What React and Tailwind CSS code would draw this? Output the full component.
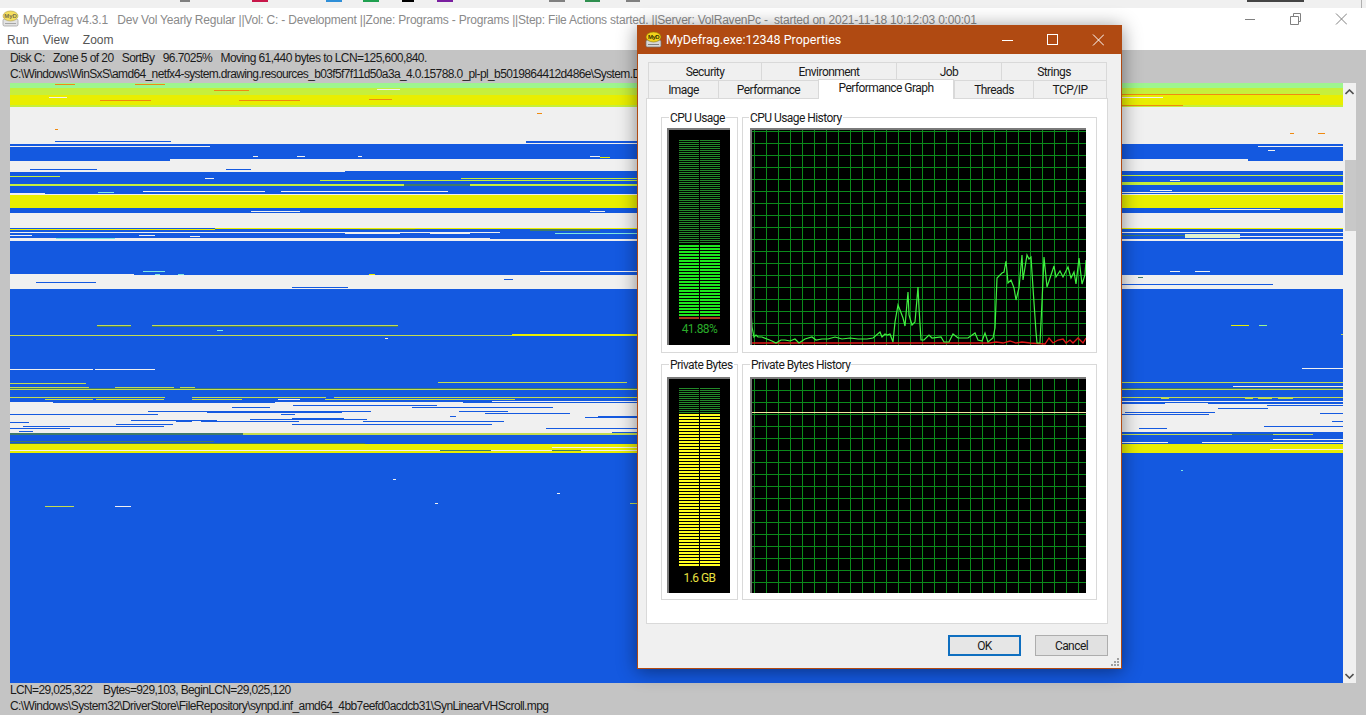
import React from "react";

const COLORS = {
  b: "#1459e0",
  w: "#f0f0f0",
  y: "#e9ee00",
  l: "#9df58f",
  n: "#c6ef3c",
  o: "#f08a10",
  g: "#3f7a6a",
  k: "#c4dc50",
  c: "#7fe8e0",
  p: "#dff0d0",
};

// y, height, x1, x2, colour -- read off the disk map, page coords
const MAP_ROWS = [
  [83, 5, 10, 1343, "l"], [88, 7, 10, 1343, "n"], [95, 10, 10, 1343, "y"], [105, 2, 10, 1343, "n"],
  [84, 1, 55, 75, "o"], [84, 1, 135, 165, "o"], [90, 1, 214, 249, "o"], [89, 1, 377, 400, "w"],
  [100, 1, 100, 151, "o"], [100, 1, 239, 300, "o"], [99, 1, 369, 392, "o"], [97, 1, 49, 67, "w"],
  [94, 1, 1122, 1320, "o"], [97, 1, 1122, 1163, "w"], [105, 1, 1122, 1183, "o"], [108, 1, 1250, 1262, "o"], [108, 1, 1270, 1281, "o"],
  [107, 37, 10, 1343, "w"], [129, 1, 55, 58, "o"], [113, 1, 537, 542, "o"], [133, 1, 1290, 1294, "o"], [133, 1, 1318, 1325, "o"],
  [141, 1, 55, 171, "b"], [141, 2, 526, 637, "b"],
  [145, 16, 10, 1343, "b"], [146, 1, 10, 210, "w"], [146, 1, 1258, 1343, "w"], [156, 1, 253, 258, "w"], [156, 1, 297, 305, "w"], [156, 1, 358, 362, "w"], [156, 1, 590, 600, "w"], [157, 1, 600, 610, "y"], [150, 1, 1268, 1275, "w"],
  [159, 2, 170, 1248, "w"], [161, 10, 10, 1343, "w"], [169, 1, 30, 97, "b"], [169, 1, 226, 251, "b"],
  [171, 14, 10, 1343, "b"], [171, 1, 10, 345, "w"], [176, 1, 10, 60, "n"], [175, 1, 1122, 1343, "n"], [178, 1, 205, 214, "w"], [178, 1, 461, 637, "n"], [180, 1, 320, 637, "n"], [180, 1, 1170, 1180, "w"],
  [184, 2, 10, 404, "n"], [184, 2, 404, 470, "g"], [184, 2, 470, 637, "n"], [182, 3, 1122, 1343, "n"],
  [186, 8, 10, 1343, "b"], [191, 1, 143, 265, "w"], [191, 1, 281, 448, "w"], [192, 1, 98, 114, "c"], [192, 1, 1122, 1343, "w"], [190, 1, 1150, 1172, "w"], [193, 1, 10, 45, "w"],
  [194, 1, 10, 1343, "w"], [195, 13, 10, 1343, "y"],
  [208, 5, 10, 1343, "b"], [211, 1, 251, 300, "w"], [211, 1, 590, 605, "w"], [209, 1, 1210, 1280, "w"],
  [213, 15, 10, 1343, "w"],
  [228, 1, 215, 1343, "y"], [229, 1, 10, 215, "y"], [229, 1, 360, 415, "g"], [230, 2, 10, 1343, "b"], [229, 2, 530, 600, "g"],
  [232, 1, 10, 500, "w"], [232, 2, 500, 637, "b"], [232, 1, 1122, 1343, "w"], [233, 1, 44, 190, "b"], [233, 2, 190, 637, "b"], [233, 1, 345, 400, "w"], [233, 1, 430, 470, "w"],
  [234, 4, 10, 1343, "b"], [235, 1, 10, 32, "w"], [235, 1, 139, 155, "w"], [236, 1, 190, 200, "w"], [235, 1, 1122, 1185, "g"], [233, 1, 555, 637, "c"],
  [234, 5, 1185, 1240, "p"], [236, 1, 1240, 1343, "w"],
  [238, 3, 10, 1343, "w"], [238, 1, 56, 115, "c"], [238, 1, 490, 1343, "b"], [241, 1, 570, 637, "b"],
  [271, 1, 143, 165, "c"], [271, 1, 540, 637, "w"], [271, 1, 1170, 1180, "w"], [271, 1, 1195, 1210, "w"], [274, 1, 10, 134, "w"], [274, 1, 155, 160, "c"], [274, 1, 178, 184, "c"], [274, 2, 369, 375, "y"],
  [275, 14, 10, 1343, "w"], [282, 1, 36, 96, "b"], [287, 1, 292, 348, "b"], [279, 1, 504, 513, "b"], [277, 1, 1138, 1143, "g"], [284, 1, 1122, 1273, "b"],
  [325, 1, 97, 131, "k"], [326, 1, 97, 131, "g"], [325, 1, 152, 398, "k"], [326, 1, 152, 398, "g"], [330, 1, 217, 223, "c"], [325, 1, 1231, 1249, "y"], [325, 1, 1259, 1267, "l"],
  [335, 1, 10, 637, "k"], [334, 2, 512, 637, "y"], [334, 1, 1341, 1343, "k"], [338, 1, 385, 388, "w"], [368, 1, 1302, 1343, "w"], [369, 1, 10, 93, "w"], [369, 1, 95, 155, "w"],
  [382, 1, 438, 627, "k"], [382, 1, 1122, 1343, "k"], [383, 1, 10, 86, "k"], [386, 1, 1233, 1343, "w"], [387, 1, 10, 89, "k"], [387, 1, 115, 174, "k"], [387, 1, 180, 195, "k"], [388, 1, 1237, 1343, "k"],
  [388, 1, 10, 1343, "g"], [389, 1, 10, 1343, "k"], [397, 1, 10, 165, "k"], [397, 1, 192, 326, "k"], [397, 1, 334, 1343, "k"],
  [399, 1, 45, 93, "k"], [399, 1, 96, 164, "k"], [399, 1, 192, 242, "k"], [399, 1, 278, 300, "w"], [399, 1, 325, 515, "k"], [398, 1, 1161, 1169, "k"], [398, 1, 1245, 1253, "k"], [398, 1, 1258, 1272, "k"], [398, 1, 1278, 1293, "k"],
  [402, 1, 10, 53, "w"], [403, 1, 105, 258, "w"], [402, 1, 275, 463, "w"], [401, 1, 492, 637, "w"], [401, 1, 1122, 1343, "w"],
  [403, 30, 10, 1343, "w"], [403, 1, 1122, 1165, "b"], [403, 1, 1208, 1343, "b"], [405, 1, 293, 437, "b"], [405, 1, 1267, 1343, "b"], [407, 1, 232, 270, "b"], [407, 1, 412, 553, "b"], [408, 1, 1218, 1268, "b"],
  [411, 1, 148, 209, "b"], [411, 2, 207, 342, "b"], [411, 1, 342, 371, "b"], [411, 1, 459, 508, "b"], [412, 1, 1125, 1215, "b"], [413, 1, 485, 570, "b"], [413, 1, 1320, 1343, "b"], [414, 1, 10, 158, "b"], [414, 1, 281, 295, "b"], [414, 1, 1122, 1209, "b"],
  [416, 1, 450, 456, "b"], [416, 1, 598, 637, "b"], [417, 1, 585, 637, "b"], [419, 1, 250, 367, "b"], [418, 2, 292, 344, "b"], [420, 1, 131, 217, "b"], [420, 2, 176, 192, "b"], [421, 1, 201, 299, "b"], [421, 1, 363, 504, "b"], [421, 1, 1332, 1343, "b"], [422, 1, 10, 29, "b"],
  [424, 1, 116, 173, "b"], [424, 1, 292, 492, "b"], [426, 1, 23, 164, "b"], [426, 1, 1264, 1343, "b"], [428, 1, 10, 70, "b"], [428, 1, 546, 637, "b"], [428, 1, 1139, 1167, "b"], [431, 1, 19, 33, "b"], [432, 1, 612, 637, "b"], [432, 1, 1122, 1343, "b"],
  [433, 2, 10, 243, "g"], [433, 2, 243, 637, "k"], [434, 2, 1122, 1232, "k"], [434, 2, 1232, 1273, "g"], [434, 2, 1273, 1313, "k"],
  [435, 9, 10, 1343, "b"], [434, 1, 1313, 1343, "b"], [439, 1, 1273, 1343, "w"], [441, 1, 10, 214, "g"], [442, 1, 1122, 1168, "w"], [442, 1, 1202, 1343, "w"], [443, 1, 10, 365, "g"],
  [444, 9, 10, 1343, "y"], [450, 1, 10, 637, "w"], [450, 1, 440, 491, "g"], [450, 1, 552, 581, "g"], [447, 1, 552, 637, "w"], [449, 1, 1270, 1343, "w"],
  [479, 1, 393, 396, "w"], [493, 1, 557, 560, "w"], [503, 1, 435, 438, "w"], [503, 1, 630, 637, "k"], [506, 1, 45, 74, "k"], [506, 1, 115, 131, "w"], [470, 1, 1181, 1183, "c"],
];

const CPU_GREEN = "751,310 752,327 754,337 756,335 758,337 762,337 767,339 772,341 776,343 781,340 785,340 790,341 795,339 799,343 805,339 812,337 816,340 822,339 828,339 835,337 842,339 850,338 858,339 867,339 873,338 880,332 882,337 885,334 887,335 890,334 893,342 895,322 898,305 900,310 903,318 905,326 908,292 909,315 912,325 915,322 918,287 919,308 921,340 924,340 929,335 932,338 941,337 944,342 949,342 953,334 958,338 968,338 975,333 978,340 982,341 985,333 988,342 993,338 995,328 997,278 1002,273 1004,272 1006,261 1008,283 1011,280 1014,288 1016,300 1019,288 1022,255 1023,280 1027,255 1029,259 1031,257 1033,288 1036,332 1037,343 1040,343 1042,302 1044,257 1047,287 1051,275 1054,266 1056,277 1060,271 1063,277 1068,267 1071,278 1074,272 1076,284 1079,258 1082,284 1085,275 1086,260";
const CPU_RED = "751,343 990,343 996,342 1003,343 1010,341 1016,343 1022,342 1030,343 1045,344 1049,338 1053,343 1058,340 1063,339 1066,343 1070,340 1073,343 1078,338 1083,343 1086,338";

const UPPER_TABS = [
  { label: "Security", width: "w-[113px]" },
  { label: "Environment", width: "w-[135px]" },
  { label: "Job", width: "w-[105px]" },
  { label: "Strings", width: "w-[106px]" },
];

const LOWER_TABS = [
  { label: "Image", width: "w-[70px]" },
  { label: "Performance", width: "w-[100px]" },
  { label: "Performance Graph", width: "w-[136px]", active: true },
  { label: "Threads", width: "w-[79px]" },
  { label: "TCP/IP", width: "w-[74px]" },
];

const TOP_MARKS = [
  "left-[180px] w-[10px] bg-[#808080]",
  "left-[252px] w-[16px] bg-[#c8174a]",
  "left-[326px] w-[16px] bg-[#2f8fd8]",
  "left-[363px] w-[16px] bg-[#20a050]",
  "left-[402px] w-[12px] bg-[#000000]",
  "left-[437px] w-[16px] bg-[#7a1fa0]",
  "left-[549px] w-[16px] bg-[#808080]",
  "left-[585px] w-[15px] bg-[#2f8f4f]",
  "left-[626px] w-[14px] bg-[#808080]",
  "left-[1247px] w-[57px] bg-[#444444]",
];

function DiskMap() {
  return (
    <svg width="1333" height="600" viewBox="10 83 1333 600" shapeRendering="crispEdges" className="block">
      <rect x="10" y="83" width="1333" height="600" fill={COLORS.b} />
      {MAP_ROWS.map(([y, h, x1, x2, c], i) => (
        <rect key={i} x={x1} y={y} width={x2 - x1} height={h} fill={COLORS[c]} />
      ))}
    </svg>
  );
}

function Scrollbar() {
  return (
    <div className="w-[13px] h-[600px] bg-[#f0f0f0] flex flex-col items-center justify-between pt-[6px] pb-[4px]">
      <svg width="9" height="6" viewBox="0 0 9 6">
        <path d="M0.5 5 L4.5 1 L8.5 5" fill="none" stroke="#505050" strokeWidth="1.6" />
      </svg>
      <svg width="9" height="6" viewBox="0 0 9 6">
        <path d="M0.5 1 L4.5 5 L8.5 1" fill="none" stroke="#505050" strokeWidth="1.6" />
      </svg>
    </div>
  );
}

function AppIcon({ className }) {
  return (
    <svg width="17" height="18" viewBox="0 0 17 18" className={className}>
      <rect x="1" y="9" width="15" height="7" rx="1.5" fill="#d8d8d8" stroke="#707070" strokeWidth="0.7" />
      <rect x="3" y="13" width="11" height="1" fill="#808080" />
      <ellipse cx="8.5" cy="6" rx="7.5" ry="5" fill="#f2d21b" stroke="#8a7400" strokeWidth="0.6" />
      <text x="8.5" y="8" textAnchor="middle" fontSize="6" fontWeight="700" fontFamily="Liberation Sans, sans-serif" fill="#3a3000">MyD</text>
    </svg>
  );
}

function Tab({ label, width, active }) {
  if (active) {
    return (
      <div className={`${width} h-[20px] -mt-px relative z-10 bg-white border border-b-0 border-[#d9d9d9] text-center leading-[16px]`}>
        {label}
      </div>
    );
  }
  return (
    <div className={`${width} h-full bg-[#f0f0f0] border-t border-l last:border-r border-[#d9d9d9] text-center leading-[18px]`}>
      {label}
    </div>
  );
}

function GroupBox({ title, width, titleLeft, children }) {
  return (
    <div className={`${width} h-[236px] relative border border-[#d9d9d9]`}>
      <span className={`absolute -top-[7px] ${titleLeft} px-[1px] bg-white leading-[14px] whitespace-nowrap`}>{title}</span>
      {children}
    </div>
  );
}

function Gauge({ rowsFrom, rowsTo, dimFrom, color, bottom, label, labelColor }) {
  const rows = [];
  for (let y = rowsFrom; y < rowsTo; y += 3) rows.push(y);
  const dimRows = [];
  for (let y = dimFrom; y < rowsFrom - 1; y += 2) dimRows.push(y);
  return (
    <div className="w-[63px] h-full bg-black border-t-2 border-l-2 border-[#7a7a7a] flex flex-col items-center">
      <svg width="61" height="192" viewBox="0 0 61 192" shapeRendering="crispEdges" className="block shrink-0">
        {dimRows.map((y) => (
          <g key={y} fill="#238a2a">
            <rect x="10" y={y} width="20" height="1" />
            <rect x="31" y={y} width="20" height="1" />
          </g>
        ))}
        {rows.map((y) => (
          <g key={y} fill={y >= rowsTo - 3 * bottom ? "#a83a20" : color}>
            <rect x="10" y={y} width="20" height="2" />
            <rect x="31" y={y} width="20" height="2" />
          </g>
        ))}
      </svg>
      <span className={`${labelColor} leading-[14px]`}>{label}</span>
    </div>
  );
}

function History({ lineOffset, children }) {
  const lines = [];
  for (let x = 2; x < 336; x += 12) lines.push(<rect key={`v${x}`} x={x} y="0" width="1" height="216" />);
  for (let y = lineOffset; y < 216; y += 12) lines.push(<rect key={`h${y}`} x="0" y={y} width="336" height="1" />);
  return (
    <div className="w-[336px] h-full bg-black border-t-2 border-l-2 border-[#7a7a7a] overflow-hidden">
      <svg width="336" height="216" viewBox="0 0 336 216" className="block">
        <g fill="#0b8a1b" shapeRendering="crispEdges">{lines}</g>
        {children}
      </svg>
    </div>
  );
}

function PropertiesDialog() {
  return (
    <div className="absolute left-[637px] top-[25px] w-[485px] h-[644px] bg-[#f0f0f0] border border-[#b04a12] shadow-[0_2px_18px_rgba(0,0,0,0.45)] text-[12px] text-[#1a1a1a] flex flex-col [font-family:'Roboto',sans-serif] tracking-[-0.55px]">
      <div className="h-[28px] shrink-0 bg-[#b04a12] text-white flex items-center">
        <AppIcon className="ml-[7px] mr-[4px]" />
        <span className="text-[12.5px] tracking-normal">MyDefrag.exe:12348 Properties</span>
        <svg width="102" height="12" viewBox="0 0 102 12" className="ml-auto mr-[17px]" fill="none" stroke="#ffffff">
          <path d="M0 6.5 H11" />
          <rect x="45.5" y="0.5" width="10" height="10" />
          <path d="M91 0.5 L102 11.5 M102 0.5 L91 11.5" />
        </svg>
      </div>

      <div className="flex h-[18px] mt-[8px] ml-[10px] shrink-0">
        {UPPER_TABS.map((t) => (
          <Tab key={t.label} {...t} />
        ))}
      </div>
      <div className="flex h-[19px] ml-[10px] shrink-0 items-start">
        {LOWER_TABS.map((t) => (
          <Tab key={t.label} {...t} />
        ))}
      </div>

      <div className="-mt-px ml-[8px] w-[462px] h-[526px] shrink-0 bg-white border border-[#d9d9d9] pt-[18px] pl-[14px] flex flex-col gap-[11px]">
        <div className="flex gap-[4px]">
          <GroupBox title="CPU Usage" width="w-[77px]" titleLeft="left-[7px]">
            <div className="ml-[5px] mt-[10px] h-[217px]">
              <Gauge dimFrom={10} rowsFrom={115} rowsTo={188} color="#1fe81f" bottom={1} label="41.88%" labelColor="text-[#2aaa2a]" />
            </div>
          </GroupBox>
          <GroupBox title="CPU Usage History" width="w-[355px]" titleLeft="left-[6px]">
            <div className="ml-[7px] mt-[10px] h-[217px]">
              <History lineOffset={1}>
                <g transform="translate(-752,-130)" fill="none">
                  <polyline points={CPU_RED} stroke="#e01818" strokeWidth="1.3" />
                  <polyline points={CPU_GREEN} stroke="#40f040" strokeWidth="1.2" />
                </g>
              </History>
            </div>
          </GroupBox>
        </div>
        <div className="flex gap-[4px]">
          <GroupBox title="Private Bytes" width="w-[77px]" titleLeft="left-[7px]">
            <div className="ml-[5px] mt-[12px] h-[216px]">
              <Gauge dimFrom={9} rowsFrom={35} rowsTo={188} color="#ffff20" bottom={0} label="1.6 GB" labelColor="text-[#e8e040]" />
            </div>
          </GroupBox>
          <GroupBox title="Private Bytes History" width="w-[355px]" titleLeft="left-[7px]">
            <div className="ml-[7px] mt-[12px] h-[216px]">
              <History lineOffset={11}>
                <rect x="0" y="33" width="336" height="1" fill="#f6e8a0" shapeRendering="crispEdges" />
              </History>
            </div>
          </GroupBox>
        </div>
      </div>

      <div className="flex justify-end gap-[14px] mt-[11px] mr-[13px]">
        <button className="w-[73px] h-[21px] bg-[#e6e6e6] border-2 border-[#0f6fc0] leading-none">OK</button>
        <button className="w-[73px] h-[21px] bg-[#e1e1e1] border border-[#adadad] leading-none">Cancel</button>
      </div>

      <svg width="8" height="8" viewBox="0 0 8 8" className="absolute right-[2px] bottom-[2px]" fill="#a0a0a0" shapeRendering="crispEdges">
        <rect x="6" y="0" width="2" height="2" />
        <rect x="3" y="3" width="2" height="2" />
        <rect x="6" y="3" width="2" height="2" />
        <rect x="0" y="6" width="2" height="2" />
        <rect x="3" y="6" width="2" height="2" />
        <rect x="6" y="6" width="2" height="2" />
      </svg>
    </div>
  );
}

export default function App() {
  return (
    <div className="relative w-[1366px] h-[715px] overflow-hidden bg-[#c4c4c4] text-[12px] flex flex-col [font-family:'Liberation_Sans',Arial,sans-serif]">
      {/* sliver of the window behind */}
      <div className="relative h-[8px] shrink-0 bg-[#f0f0f0]">
        {TOP_MARKS.map((cls) => (
          <div key={cls} className={`absolute top-0 h-[2px] ${cls}`} />
        ))}
        <div className="absolute left-[1361px] top-0 h-full w-px bg-[#b0b0b0]" />
      </div>

      <div className="h-[22px] shrink-0 bg-white flex items-center text-[#8a8a8a] relative">
        <AppIcon className="ml-[2px] mr-[4px] opacity-70" />
        <span className="whitespace-pre pt-[2px] tracking-[-0.21px]">MyDefrag v4.3.1   Dev Vol Yearly Regular ||Vol: C: - Development ||Zone: Programs - Programs ||Step: File Actions started. ||Server: VolRavenPc -  started on 2021-11-18 10:12:03 0:00:01</span>
        <svg width="102" height="12" viewBox="0 0 102 12" className="absolute left-[1245px] top-[5px]" fill="none" stroke="#808080">
          <path d="M0 6.5 H10" />
          <path d="M45.5 3.5 H53.5 V11.5 H45.5 Z M48.5 3.5 V0.5 H55.5 V8.5 H53.5" />
          <path d="M91 0.5 L102 11.5 M102 0.5 L91 11.5" />
        </svg>
      </div>

      <div className="h-[20px] shrink-0 bg-white flex items-center gap-[14px] pl-[7px] text-[#555555]">
        <span>Run</span>
        <span>View</span>
        <span>Zoom</span>
      </div>

      <div className="flex-1 flex flex-col text-[#1a1a1a]">
        <div className="h-[33px] shrink-0 pl-[10px] leading-[16px] whitespace-pre tracking-[-0.57px]">
          <div>Disk C:   Zone 5 of 20   SortBy   96.7025%   Moving 61,440 bytes to LCN=125,600,840.</div>
          <div className="tracking-[-0.63px]">C:\Windows\WinSxS\amd64_netfx4-system.drawing.resources_b03f5f7f11d50a3a_4.0.15788.0_pl-pl_b5019864412d486e\System.D</div>
        </div>
        <div className="flex ml-[10px] relative">
          <DiskMap />
          <Scrollbar />
          <div className="absolute left-[1335px] top-[77px] w-[11px] h-[71px] bg-[#c8c8c8]" />
        </div>
        <div className="pl-[10px] -mt-px leading-[16px] whitespace-pre tracking-[-0.6px]">
          <div className="tracking-[-0.63px]">LCN=29,025,322    Bytes=929,103, BeginLCN=29,025,120</div>
          <div>C:\Windows\System32\DriverStore\FileRepository\synpd.inf_amd64_4bb7eefd0acdcb31\SynLinearVHScroll.mpg</div>
        </div>
      </div>

      <PropertiesDialog />
    </div>
  );
}
